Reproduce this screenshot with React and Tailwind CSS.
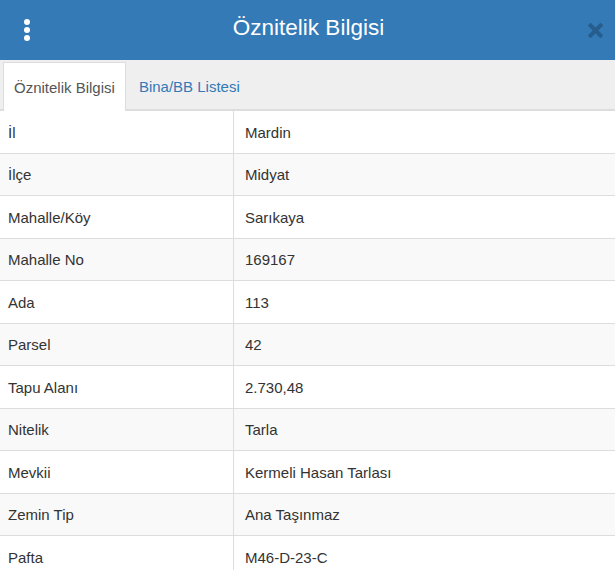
import React from "react";

const rows = [
  ["İl", "Mardin"],
  ["İlçe", "Midyat"],
  ["Mahalle/Köy", "Sarıkaya"],
  ["Mahalle No", "169167"],
  ["Ada", "113"],
  ["Parsel", "42"],
  ["Tapu Alanı", "2.730,48"],
  ["Nitelik", "Tarla"],
  ["Mevkii", "Kermeli Hasan Tarlası"],
  ["Zemin Tip", "Ana Taşınmaz"],
  ["Pafta", "M46-D-23-C"],
];

export default function App() {
  return (
    <div
      className="w-[615px] h-[570px] overflow-hidden bg-white text-[#333]"
      style={{ fontFamily: '"Liberation Sans", Arial, sans-serif' }}
    >
      <div className="h-[60px] bg-[#337ab7] flex items-center relative">
        <div className="w-[52px] flex flex-col items-center gap-[2px] pl-[1px]">
          <span className="w-[6px] h-[6px] rounded-full bg-white" />
          <span className="w-[6px] h-[6px] rounded-full bg-white" />
          <span className="w-[6px] h-[6px] rounded-full bg-white" />
        </div>
        <div className="flex-1 text-center text-white text-[22.5px] pb-[5px] pl-[2px]">
          Öznitelik Bilgisi
        </div>
        <div className="w-[52px] flex items-center justify-center pl-[12px] pt-[1px]">
          <svg width="15" height="15" viewBox="0 0 15 15">
            <path
              d="M2.5 2.5 L12.5 12.5 M12.5 2.5 L2.5 12.5"
              stroke="#275d8c"
              strokeWidth="4"
              strokeLinecap="square"
            />
          </svg>
        </div>
      </div>
      <div className="h-[51px] bg-[#efefef] border-b-2 border-[#dddddd] flex items-end pl-[3px]">
        <div className="h-[49px] -mb-[2px] bg-white border border-b-0 border-[#dddddd] pl-[10px] pr-[10px] pt-[3px] flex items-center text-[15px] text-[#555]">
          Öznitelik Bilgisi
        </div>
        <div className="h-[47px] pl-[13px] pt-[3px] flex items-center text-[15px] text-[#337ab7]">
          Bina/BB Listesi
        </div>
      </div>
      <div className="flex flex-col">
        {rows.map(([k, v], i) => (
          <div
            key={k}
            className={`flex h-[42.5px] shrink-0 border-b border-[#dddddd] text-[15px] ${
              i % 2 === 1 ? "bg-[#f9f9f9]" : "bg-white"
            }`}
          >
            <div className="w-[234px] border-r border-[#dddddd] pl-[8px] pt-[2px] flex items-center">
              {k}
            </div>
            <div className="flex-1 pl-[11px] pt-[2px] flex items-center">{v}</div>
          </div>
        ))}
      </div>
    </div>
  );
}
